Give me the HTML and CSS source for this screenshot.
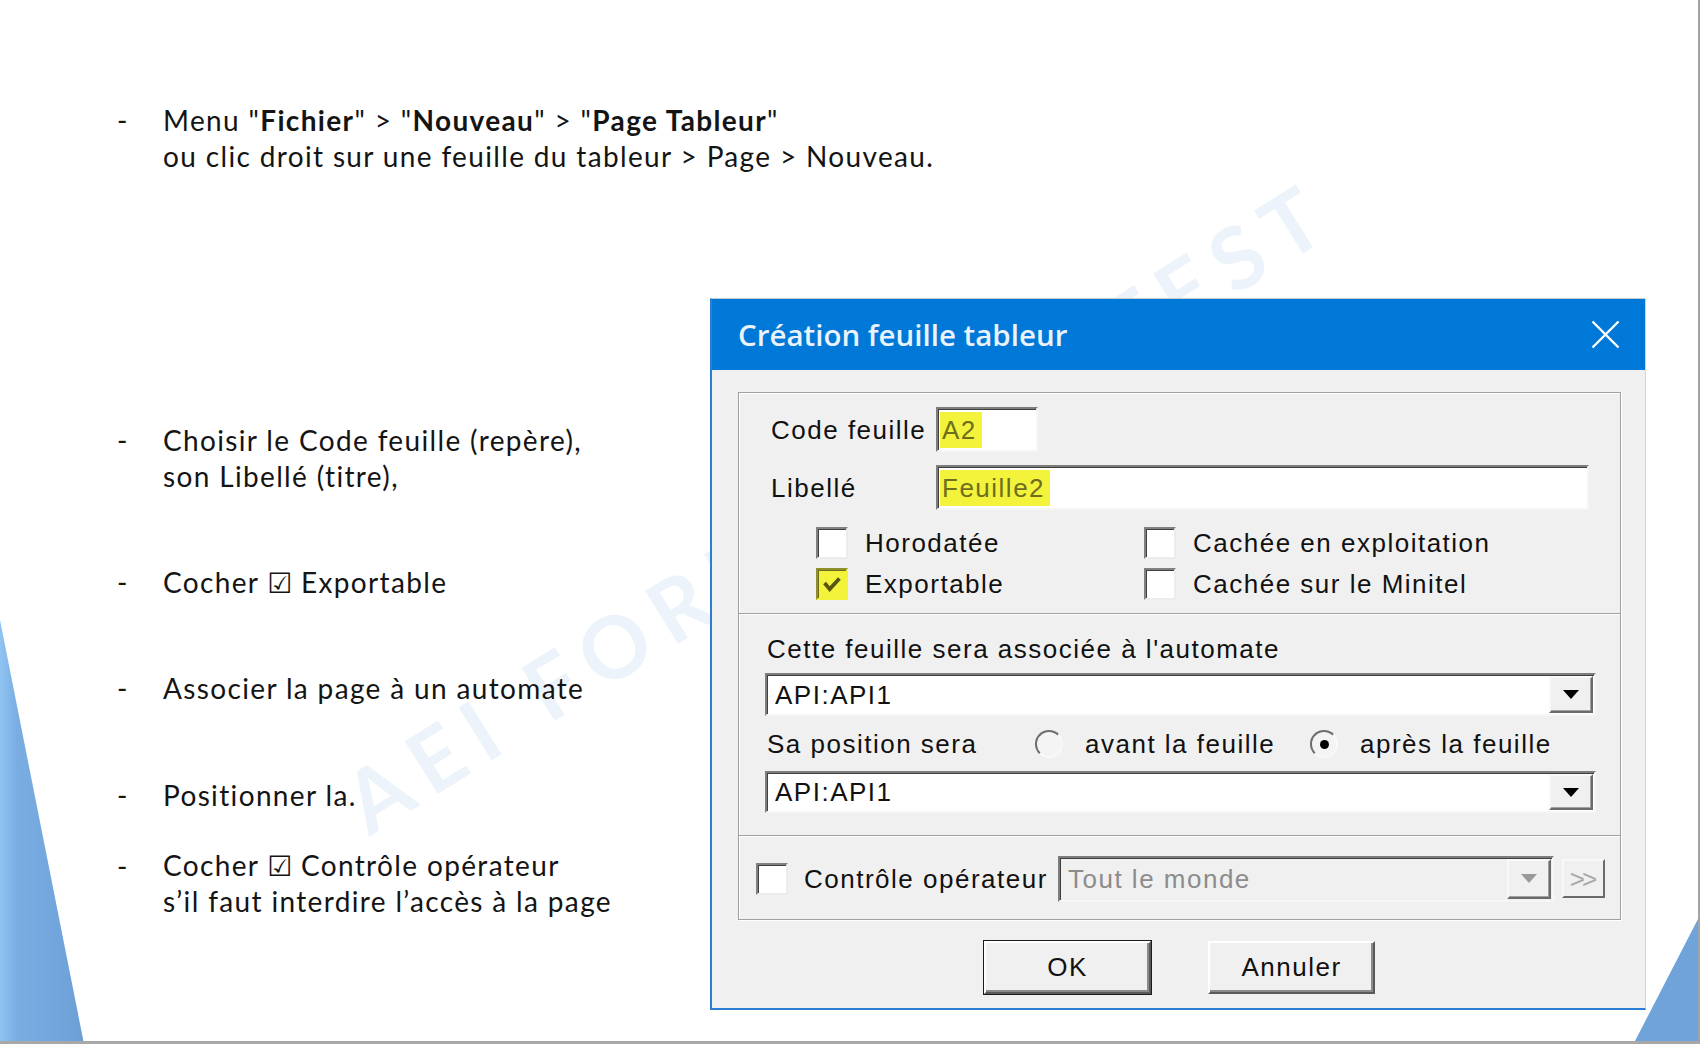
FILE: index.html
```html
<!DOCTYPE html>
<html lang="fr">
<head>
<meta charset="utf-8">
<title>Création feuille tableur</title>
<link rel="stylesheet" href="styles.css">
</head>
<body>
<div class="slide">
  <div class="watermark">AEI FORMATION TEST</div>
  <div class="deco deco-left"></div>
  <div class="deco deco-right"></div>

  <ul class="steps steps-top">
    <li><span class="dash">-</span><div class="txt">Menu "<b>Fichier</b>" &gt; "<b>Nouveau</b>" &gt; "<b>Page Tableur</b>"<br>ou clic droit sur une feuille du tableur &gt; Page &gt; Nouveau.</div></li>
  </ul>

  <div class="content">
    <ul class="steps steps-side">
      <li class="st-first"><span class="dash">-</span><div class="txt">Choisir le Code feuille (repère),<br>son Libellé (titre),</div></li>
      <li class="st-exp"><span class="dash">-</span><div class="txt">Cocher <span class="sym">☑</span> Exportable</div></li>
      <li class="st-auto"><span class="dash">-</span><div class="txt">Associer la page à un automate</div></li>
      <li class="st-pos"><span class="dash">-</span><div class="txt">Positionner la.</div></li>
      <li class="st-ctrl"><span class="dash">-</span><div class="txt">Cocher <span class="sym">☑</span> Contrôle opérateur<br>s’il faut interdire l’accès à la page</div></li>
    </ul>

    <div class="dialog">
      <div class="titlebar">
        <span class="title">Création feuille tableur</span>
        <svg class="close" viewBox="0 0 29 29"><path d="M1.5 1.5L27.5 27.5M27.5 1.5L1.5 27.5" stroke="#ffffff" stroke-width="2.4" fill="none"/></svg>
      </div>
      <div class="dbody">
        <div class="frame">
          <div class="sect sect1">
            <div class="field-row">
              <span class="lbl">Code feuille</span>
              <div class="edit edit-code"><span class="hl">A2</span></div>
            </div>
            <div class="field-row row-lib">
              <span class="lbl">Libellé</span>
              <div class="edit edit-lib"><span class="hl">Feuille2</span></div>
            </div>
            <div class="checks">
              <div class="chk"><span class="box"></span><span>Horodatée</span></div>
              <div class="chk"><span class="box"></span><span>Cachée en exploitation</span></div>
              <div class="chk"><span class="box box-hl"><svg class="tick" viewBox="0 0 28 28"><path d="M6 13L11.5 19.5L22 8" stroke="#55550f" stroke-width="4" fill="none"/></svg></span><span>Exportable</span></div>
              <div class="chk"><span class="box"></span><span>Cachée sur le Minitel</span></div>
            </div>
          </div>
          <div class="sect sect2">
            <div class="cap">Cette feuille sera associée à l'automate</div>
            <div class="combo combo1">
              <span class="val">API:API1</span>
              <span class="drop"><svg class="tri" viewBox="0 0 16 9"><path d="M0 0H16L8 9Z" fill="#000"/></svg></span>
            </div>
            <div class="pos-row">
              <span class="pos-lbl">Sa position sera</span>
              <span class="radio"></span>
              <span class="r-lbl r-lbl1">avant la feuille</span>
              <span class="radio radio-on"></span>
              <span class="r-lbl">après la feuille</span>
            </div>
            <div class="combo combo2">
              <span class="val">API:API1</span>
              <span class="drop"><svg class="tri" viewBox="0 0 16 9"><path d="M0 0H16L8 9Z" fill="#000"/></svg></span>
            </div>
          </div>
          <div class="sect sect3">
            <span class="box"></span>
            <span class="ctrl-lbl">Contrôle opérateur</span>
            <div class="combo combo-dis">
              <span class="val">Tout le monde</span>
              <span class="drop"><svg class="tri" viewBox="0 0 16 9"><path d="M0 0H16L8 9Z" fill="#9a9a9a"/></svg></span>
            </div>
            <span class="more">&gt;&gt;</span>
          </div>
        </div>
        <div class="buttons">
          <button class="btn btn-default">OK</button>
          <button class="btn">Annuler</button>
        </div>
      </div>
    </div>
  </div>
</div>
</body>
</html>
```

FILE: styles.css
```css
* { box-sizing: border-box; }
html, body { margin: 0; padding: 0; background: #ffffff; }
body { width: 1700px; height: 1044px; overflow: hidden; }

.slide {
  position: relative;
  isolation: isolate;
  width: 1700px;
  height: 1044px;
  padding: 102px 0 0 117px;
  border-right: 2px solid #a3a3a3;
  border-bottom: 3px solid #a8a8a8;
  overflow: hidden;
  background: #ffffff;
  font-family: Lato, "Open Sans", sans-serif;
  font-size: 28px;
  line-height: 36px;
  letter-spacing: 1.35px;
  color: #141414;
}

.watermark {
  position: absolute;
  left: 838px;
  top: 505px;
  transform: translate(-50%, -50%) rotate(-32deg);
  z-index: -1;
  white-space: nowrap;
  font-family: Lato, sans-serif;
  font-weight: 700;
  font-size: 86px;
  line-height: 1;
  letter-spacing: 14px;
  color: #edf3fb;
}

.deco { position: absolute; z-index: 2; }
.deco-left {
  left: 0;
  top: 620px;
  width: 84px;
  height: 424px;
  background: linear-gradient(90deg, #8fc3f1 0%, #7aaee3 20%, #6b9fd6 100%);
  clip-path: polygon(0 0, 100% 100%, 0 100%);
}
.deco-right {
  right: 0;
  bottom: 0;
  width: 63px;
  height: 122px;
  background: #6fa3da;
  clip-path: polygon(100% 0, 100% 100%, 0 100%);
}

.steps { list-style: none; margin: 0; padding: 0; }
.steps li { display: flex; }
.dash { width: 46px; flex: none; letter-spacing: 0; }
.sym { font-family: "DejaVu Sans", sans-serif; font-size: 28px; letter-spacing: 0; }

.content { display: flex; align-items: flex-start; margin-top: 124px; }
.steps-side { width: 593px; flex: none; }
.steps-side li.st-first { margin-top: 124px; }
.steps-side li.st-exp { margin-top: 70px; }
.steps-side li.st-auto { margin-top: 68px; }
.steps-side li.st-pos { margin-top: 71px; }
.steps-side li.st-ctrl { margin-top: 35px; }
.st-ctrl .txt { line-height: 35px; }

/* Dialog */
.dialog {
  width: 936px;
  height: 712px;
  flex: none;
  display: flex;
  flex-direction: column;
  border-top: 1px solid #c4cad2;
  border-left: 2px solid #2a7fd4;
  border-bottom: 2px solid #2a7fd4;
  border-right: 1px solid #d0d6dc;
  font-family: "Liberation Sans", Arial, sans-serif;
  font-size: 26px;
  line-height: 30px;
  letter-spacing: 1.5px;
  color: #111111;
}
.titlebar {
  height: 71px;
  flex: none;
  background: #0078d7;
  display: flex;
  align-items: center;
  justify-content: space-between;
  padding: 0 25px 0 26px;
}
.title {
  font-family: "Open Sans", sans-serif;
  font-weight: 600;
  font-size: 29.5px;
  letter-spacing: 0;
  color: #eaf2fb;
}
.close { width: 29px; height: 29px; display: block; }

.dbody {
  flex: 1;
  background: #f0f0f0;
  padding: 22px 24px 0 26px;
}
.frame {
  border: 1px solid #a0a0a0;
  box-shadow: inset 1px 1px 0 #ffffff, 1px 1px 0 #ffffff;
}
.sect + .sect {
  border-top: 1px solid #a0a0a0;
  box-shadow: inset 0 1px 0 #ffffff;
}

.sect1 { padding: 14px 0 13px 32px; }
.field-row { display: flex; align-items: center; }
.row-lib { margin-top: 13px; }
.lbl { width: 165px; flex: none; }
.edit {
  height: 45px;
  background: #ffffff;
  border: 2px solid;
  border-color: #7d7d7d #f6f6f6 #f6f6f6 #7d7d7d;
  box-shadow: inset 1px 1px 0 #3f3f3f;
  padding: 0 0 0 2px;
  display: flex;
  align-items: center;
}
.edit-code { width: 102px; }
.edit-lib { width: 653px; }
.hl {
  background: #f3f33c;
  color: #6e6e1e;
  line-height: 36px;
  padding: 0 5px 0 2px;
}

.checks {
  display: grid;
  grid-template-columns: 328px auto;
  row-gap: 9px;
  margin: 17px 0 0 45px;
}
.chk { display: flex; align-items: center; height: 32px; gap: 17px; }
.box {
  width: 32px;
  height: 32px;
  flex: none;
  background: #ffffff;
  border: 2px solid;
  border-color: #808080 #ececec #ececec #808080;
  box-shadow: inset 1px 1px 0 #404040;
  display: flex;
  align-items: center;
  justify-content: center;
}
.box-hl {
  background: #f3f33c;
  border-color: #8f8f2c #f3f33c #f3f33c #8f8f2c;
  box-shadow: inset 1px 1px 0 #6c6c1c;
}
.tick { width: 26px; height: 26px; display: block; }

.sect2 { padding: 20px 24px 22px 26px; }
.cap { height: 30px; margin-left: 2px; }
.combo {
  display: flex;
  align-items: stretch;
  background: #ffffff;
  border: 2px solid;
  border-color: #7d7d7d #f6f6f6 #f6f6f6 #7d7d7d;
  box-shadow: inset 1px 1px 0 #3f3f3f;
  padding: 1px 1px 1px 8px;
}
.combo1 { height: 43px; margin-top: 9px; }
.combo2 { height: 42px; margin-top: 12px; }
.val { align-self: center; }
.drop {
  margin-left: auto;
  width: 44px;
  flex: none;
  background: #f0f0f0;
  border: 2px solid;
  border-color: #f8f8f8 #6a6a6a #6a6a6a #f8f8f8;
  box-shadow: inset -1px -1px 0 #a0a0a0;
  display: flex;
  align-items: center;
  justify-content: center;
}
.tri { width: 16px; height: 9px; display: block; }

.pos-row {
  display: flex;
  align-items: center;
  height: 30px;
  margin-top: 13px;
  padding-left: 2px;
}
.pos-lbl { width: 268px; flex: none; }
.radio {
  width: 28px;
  height: 28px;
  flex: none;
  margin-right: 22px;
  border-radius: 50%;
  border: 2px solid;
  border-color: #6d6d6d #f8f8f8 #f8f8f8 #6d6d6d;
  background: #f4f4f4;
  display: flex;
  align-items: center;
  justify-content: center;
}
.radio-on::after {
  content: "";
  width: 9px;
  height: 9px;
  border-radius: 50%;
  background: #000000;
}
.r-lbl1 { width: 225px; flex: none; }

.sect3 {
  height: 84px;
  display: flex;
  align-items: center;
  padding: 2px 0 0 17px;
}
.ctrl-lbl { margin-left: 16px; width: 244px; flex: none; white-space: nowrap; }
.combo-dis {
  width: 496px;
  height: 46px;
  margin-left: 10px;
  background: #f0f0f0;
  color: #8c8c8c;
}
.more {
  width: 43px;
  height: 39px;
  margin-left: 8px;
  flex: none;
  border: 2px solid;
  border-color: #f8f8f8 #6a6a6a #6a6a6a #f8f8f8;
  color: #a8a8a8;
  font-size: 26px;
  letter-spacing: -3px;
  padding-right: 3px;
  display: flex;
  align-items: center;
  justify-content: center;
}

.buttons {
  display: flex;
  justify-content: center;
  gap: 57px;
  margin-top: 21px;
}
.btn {
  width: 167px;
  height: 53px;
  padding: 0;
  background: #f0f0f0;
  border: 2px solid;
  border-color: #ffffff #5a5a5a #5a5a5a #ffffff;
  box-shadow: inset -2px -2px 0 #8a8a8a;
  font-family: "Liberation Sans", Arial, sans-serif;
  font-size: 26px;
  letter-spacing: 1.5px;
  color: #111111;
}
.btn-default {
  outline: 1px solid #1a1a1a;
  outline-offset: 0;
}
```
